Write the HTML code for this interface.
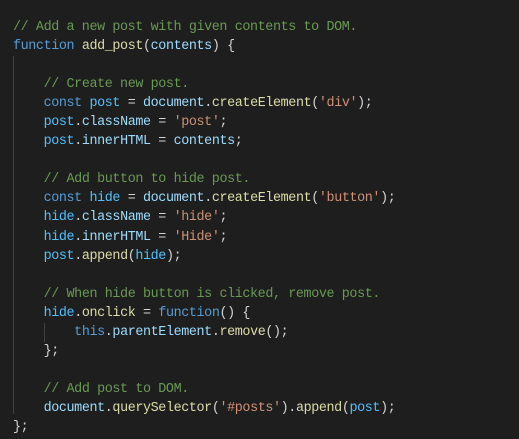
<!DOCTYPE html>
<html><head><style>
body{margin:0;background:#1e1e1e;width:519px;height:439px;overflow:hidden;position:relative}
pre{margin:0;position:absolute;left:13px;top:18px;font-family:"Liberation Mono",monospace;font-size:13.4px;letter-spacing:-0.39px;line-height:19.05px;color:#d4d4d4}
.c{color:#6a9955}.k{color:#569cd6}.f{color:#dcdcaa}.p{color:#9cdcfe}.v{color:#4fc1ff}.s{color:#ce9178}
.g{position:absolute;width:1px;background:#404040}
</style></head><body>
<div class="g" style="left:13px;top:56px;height:358px"></div>
<div class="g" style="left:44px;top:323px;height:19px"></div>
<pre><span class="c">// Add a new post with given contents to DOM.</span>
<span class="k">function</span> <span class="f">add_post</span>(<span class="p">contents</span>) {

    <span class="c">// Create new post.</span>
    <span class="k">const</span> <span class="v">post</span> = <span class="p">document</span>.<span class="f">createElement</span>(<span class="s">'div'</span>);
    <span class="v">post</span>.<span class="p">className</span> = <span class="s">'post'</span>;
    <span class="v">post</span>.<span class="p">innerHTML</span> = <span class="p">contents</span>;

    <span class="c">// Add button to hide post.</span>
    <span class="k">const</span> <span class="v">hide</span> = <span class="p">document</span>.<span class="f">createElement</span>(<span class="s">'button'</span>);
    <span class="v">hide</span>.<span class="p">className</span> = <span class="s">'hide'</span>;
    <span class="v">hide</span>.<span class="p">innerHTML</span> = <span class="s">'Hide'</span>;
    <span class="v">post</span>.<span class="f">append</span>(<span class="v">hide</span>);

    <span class="c">// When hide button is clicked, remove post.</span>
    <span class="v">hide</span>.<span class="f">onclick</span> = <span class="k">function</span>() {
        <span class="k">this</span>.<span class="p">parentElement</span>.<span class="f">remove</span>();
    };

    <span class="c">// Add post to DOM.</span>
    <span class="p">document</span>.<span class="f">querySelector</span>(<span class="s">'#posts'</span>).<span class="f">append</span>(<span class="v">post</span>);
};</pre>
</body></html>
